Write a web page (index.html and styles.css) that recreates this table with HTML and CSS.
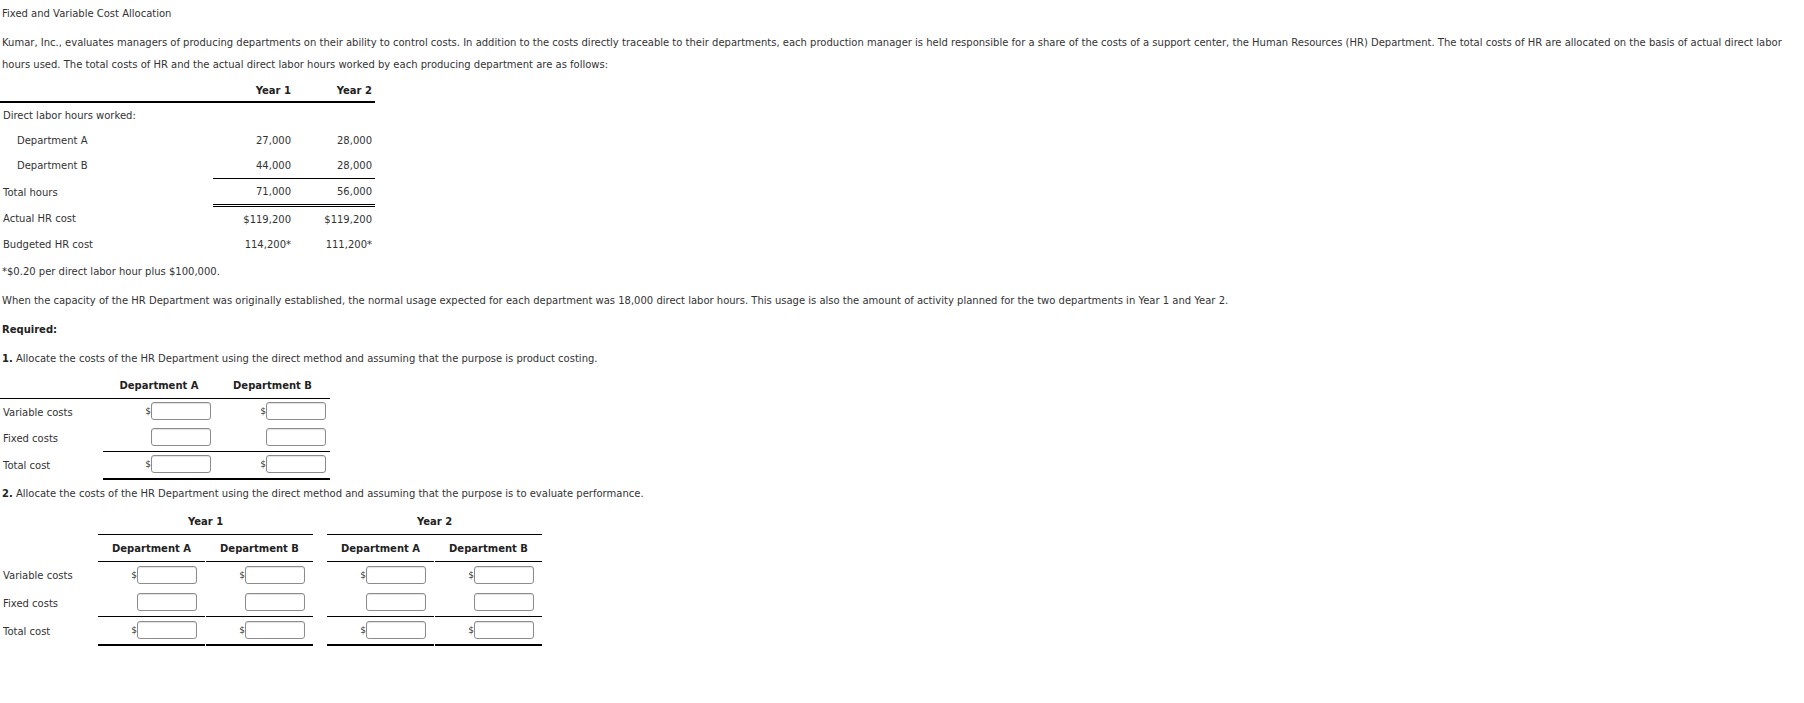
FILE: index.html
```html
<!DOCTYPE html>
<html lang="en">
  <head>
    <meta charset="UTF-8" />
    <title>Fixed and Variable Cost Allocation</title>
    <link rel="stylesheet" href="styles.css">
  </head>
  <body>
    <div class="problem">
      <p>Fixed and Variable Cost Allocation</p>

      <p>
        Kumar, Inc., evaluates managers of producing departments on their ability to control costs. In addition to the costs directly traceable to their departments, each production manager is held responsible for a share of the costs of a support center, the Human Resources (HR) Department. The total costs of HR are allocated on the basis of actual direct labor hours used. The total costs of HR and the actual direct labor hours worked by each producing department are as follows:
      </p>

      <!-- given data -->
      <table class="given">
        <colgroup>
          <col class="c-label" />
          <col class="c-num" />
          <col class="c-num" />
        </colgroup>
        <tr class="head">
          <th></th>
          <th class="num">Year 1</th>
          <th class="num">Year 2</th>
        </tr>
        <tr>
          <td class="label">Direct labor hours worked:</td>
          <td></td>
          <td></td>
        </tr>
        <tr>
          <td class="label indent">Department A</td>
          <td class="num">27,000</td>
          <td class="num">28,000</td>
        </tr>
        <tr class="subtotal">
          <td class="label indent">Department B</td>
          <td class="num">44,000</td>
          <td class="num">28,000</td>
        </tr>
        <tr class="total">
          <td class="label">Total hours</td>
          <td class="num">71,000</td>
          <td class="num">56,000</td>
        </tr>
        <tr>
          <td class="label">Actual HR cost</td>
          <td class="num">$119,200</td>
          <td class="num">$119,200</td>
        </tr>
        <tr>
          <td class="label">Budgeted HR cost</td>
          <td class="num">114,200*</td>
          <td class="num">111,200*</td>
        </tr>
      </table>

      <p>*$0.20 per direct labor hour plus $100,000.</p>

      <p>When the capacity of the HR Department was originally established, the normal usage expected for each department was 18,000 direct labor hours. This usage is also the amount of activity planned for the two departments in Year 1 and Year 2.</p>

      <p><strong>Required:</strong></p>

      <p><strong>1.</strong> Allocate the costs of the HR Department using the direct method and assuming that the purpose is product costing.</p>

      <table class="answer answer-one">
        <colgroup>
          <col class="c-label" />
          <col class="c-dept-a" />
          <col class="c-dept-b" />
        </colgroup>
        <tr class="head">
          <th></th>
          <th>Department A</th>
          <th>Department B</th>
        </tr>
        <tr>
          <td class="label">Variable costs</td>
          <td class="cell"><div class="entry"><span class="cur">$</span><input type="text" /></div></td>
          <td class="cell"><div class="entry"><span class="cur">$</span><input type="text" /></div></td>
        </tr>
        <tr class="subtotal">
          <td class="label">Fixed costs</td>
          <td class="cell"><div class="entry"><input type="text" /></div></td>
          <td class="cell"><div class="entry"><input type="text" /></div></td>
        </tr>
        <tr class="grand">
          <td class="label">Total cost</td>
          <td class="cell"><div class="entry"><span class="cur">$</span><input type="text" /></div></td>
          <td class="cell"><div class="entry"><span class="cur">$</span><input type="text" /></div></td>
        </tr>
      </table>

      <p><strong>2.</strong> Allocate the costs of the HR Department using the direct method and assuming that the purpose is to evaluate performance.</p>

      <table class="answer answer-two">
        <colgroup>
          <col class="c-label" />
          <col class="c-dept" />
          <col class="c-dept" />
          <col class="c-gap" />
          <col class="c-dept" />
          <col class="c-dept" />
        </colgroup>
        <tr class="head year">
          <td></td>
          <th colspan="2">Year 1</th>
          <td class="gap"></td>
          <th colspan="2">Year 2</th>
        </tr>
        <tr class="head dept">
          <td></td>
          <th>Department A</th>
          <th>Department B</th>
          <td class="gap"></td>
          <th>Department A</th>
          <th>Department B</th>
        </tr>
        <tr>
          <td class="label">Variable costs</td>
          <td class="cell"><div class="entry"><span class="cur">$</span><input type="text" /></div></td>
          <td class="cell"><div class="entry"><span class="cur">$</span><input type="text" /></div></td>
          <td class="gap"></td>
          <td class="cell"><div class="entry"><span class="cur">$</span><input type="text" /></div></td>
          <td class="cell"><div class="entry"><span class="cur">$</span><input type="text" /></div></td>
        </tr>
        <tr class="subtotal">
          <td class="label">Fixed costs</td>
          <td class="cell"><div class="entry"><input type="text" /></div></td>
          <td class="cell"><div class="entry"><input type="text" /></div></td>
          <td class="gap"></td>
          <td class="cell"><div class="entry"><input type="text" /></div></td>
          <td class="cell"><div class="entry"><input type="text" /></div></td>
        </tr>
        <tr class="grand">
          <td class="label">Total cost</td>
          <td class="cell"><div class="entry"><span class="cur">$</span><input type="text" /></div></td>
          <td class="cell"><div class="entry"><span class="cur">$</span><input type="text" /></div></td>
          <td class="gap"></td>
          <td class="cell"><div class="entry"><span class="cur">$</span><input type="text" /></div></td>
          <td class="cell"><div class="entry"><span class="cur">$</span><input type="text" /></div></td>
        </tr>
      </table>
    </div>
  </body>
</html>
```

FILE: styles.css
```css
body {
  margin: 0;
  padding: 3px 0 0 0;
  font-family: "DejaVu Sans", Verdana, sans-serif;
  font-size: 10px;
  color: #333;
  background: #fff;
}

.problem p {
  margin: 0 0 7px;
  padding-left: 2px;
  line-height: 22px;
}

strong {
  font-weight: bold;
  color: #222;
}

table {
  table-layout: fixed;
  border-collapse: collapse;
}

th {
  font-weight: bold;
  color: #222;
}

td,
th {
  padding: 0;
}

/* given data table */
.given {
  width: 375px;
  margin-bottom: 4px;
}

.given .c-label {
  width: 213px;
}

.given .c-num {
  width: 81px;
}

.given .head th {
  padding: 0 3px 2px;
  line-height: 16px;
  border-bottom: 2px solid #000;
}

.given td {
  padding: 5px 3px;
  line-height: 15px;
}

.num {
  text-align: right;
}

.label {
  text-align: left;
  white-space: nowrap;
}

.given td.label,
.answer td.label {
  padding-left: 3px;
}

.given td.indent {
  padding-left: 17px;
}

.given .subtotal td.num {
  border-bottom: 1px solid #000;
}

.given .total td.num {
  border-bottom: 3px double #000;
}

/* answer tables */
.answer {
  margin-bottom: 3px;
}

.answer th {
  text-align: center;
  line-height: 16px;
  border-bottom: 1px solid #000;
  white-space: nowrap;
}

.answer td.cell {
  padding: 3px 4px 5px;
}

.answer .subtotal td.cell {
  border-bottom: 1px solid #000;
}

.answer .grand td.cell {
  border-bottom: 2px solid #000;
}

.entry {
  display: flex;
  justify-content: flex-end;
  align-items: center;
}

.cur {
  font-size: 9px;
  line-height: 12px;
  color: #333;
}

.entry input {
  box-sizing: border-box;
  width: 60px;
  height: 18px;
  margin: 0;
  padding: 1px 3px;
  border: 1px solid #8c8c8c;
  border-radius: 3px;
  box-shadow: inset 0 1px 1px rgba(0, 0, 0, 0.12);
  font-family: inherit;
  font-size: 10px;
  background: #fff;
}

.answer-one {
  width: 330px;
}

.answer-one .c-label {
  width: 103px;
}

.answer-one .c-dept-a {
  width: 112px;
}

.answer-one .c-dept-b {
  width: 115px;
}

.answer-one .head th {
  padding: 1px 3px 4px;
}

.answer-two {
  border-collapse: separate;
  border-spacing: 1px 0;
  margin-left: -1px;
}

.answer-two .c-label {
  width: 97px;
}

.answer-two .c-dept {
  width: 107px;
}

.answer-two .c-gap {
  width: 12px;
}

.answer-two .year th {
  padding: 2px 3px 4px;
}

.answer-two .dept th {
  padding: 6px 3px 4px;
}

.answer-two td.cell {
  padding: 4px 8px 5px 4px;
}
```
